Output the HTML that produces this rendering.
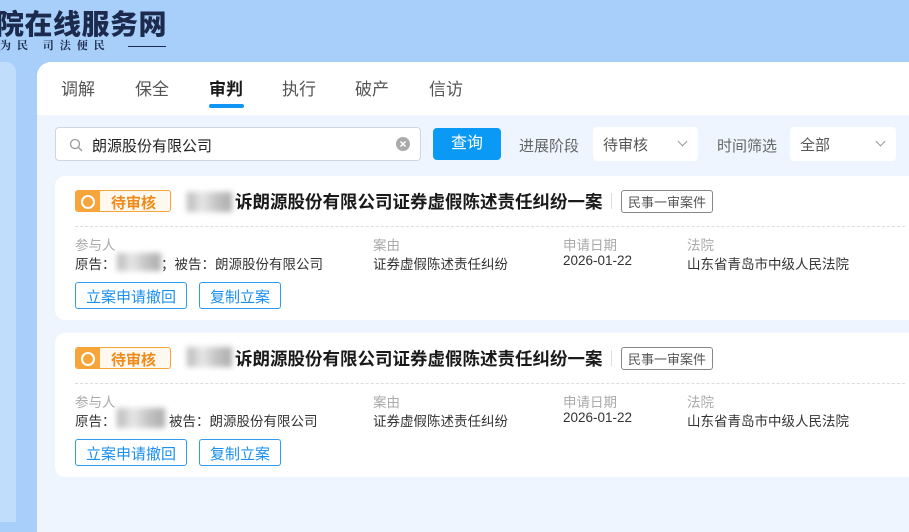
<!DOCTYPE html>
<html><head><meta charset="utf-8"><style>
*{box-sizing:border-box;margin:0;padding:0}
body{width:909px;height:518px;overflow:hidden;background:#a8cffa;font-family:"Liberation Sans","Noto Sans CJK SC",sans-serif;position:relative}
.abs{position:absolute}
.title{left:-4px;top:3px;font-size:28px;font-weight:900;color:#1c2b4d;letter-spacing:0.5px}
.sub{left:0;top:37px;font-size:11px;color:#1c2b4d;font-family:"Noto Serif CJK SC",serif;letter-spacing:6px;font-weight:bold}
.line{left:128px;top:46px;width:38px;height:1px;background:#1c2b4d}
.left{left:0;top:62px;width:16px;height:460px;background:#c1ddfc;border-radius:0 10px 0 0}
.panel{left:37px;top:62px;width:880px;height:470px;background:#eef5fe;border-radius:14px 0 0 0;overflow:hidden}
.tabs{position:absolute;left:0;top:0;width:100%;height:53px;background:#fff}
.tab{position:absolute;top:13px;font-size:17px;color:#555}
.tab.on{color:#1a1a1a;font-weight:bold}
.ul{position:absolute;left:172px;top:42px;width:35px;height:4px;border-radius:2px;background:#1195f5}
.search{left:55px;top:127px;width:366px;height:34px;background:#fff;border:1px solid #cfd6de;border-radius:4px;font-size:15px;color:#222;padding:7px 0 0 36px}
.btn{left:433px;top:128px;width:68px;height:32px;background:#0a99f5;border-radius:4px;color:#fff;font-size:16px;text-align:center;line-height:32px}
.lbl{top:135px;font-size:15px;color:#666}
.sel{top:127px;height:34px;background:#fff;border-radius:4px;font-size:15px;color:#555;padding:7px 0 0 10px}
.chev{position:absolute;right:12px;top:11px;width:7px;height:7px;border-right:1px solid #999;border-bottom:1px solid #999;transform:rotate(45deg)}
.card{left:55px;width:870px;height:144px;background:#fff;border-radius:10px}
.tag{position:absolute;left:20px;top:14px;width:96px;height:22px;border:1px solid #f5a53a;border-radius:3px;background:#fff8ef;overflow:hidden}
.tag .ic{position:absolute;left:0;top:0;width:24px;height:22px;background:#f5a53a}
.tag .ic:after{content:"";position:absolute;left:5px;top:4px;width:10px;height:10px;border:2px solid #fff;border-radius:50%}
.tag span{position:absolute;left:35px;top:1px;font-size:15px;font-weight:bold;color:#f08a1a}
.blur{position:absolute;background:linear-gradient(90deg,#999,#ddd,#aaa,#888);filter:blur(3px);opacity:.7}
.ct{position:absolute;left:180px;top:13px;font-size:17.5px;font-weight:bold;color:#1a1a1a}
.sep{position:absolute;left:556px;top:17px;width:1px;height:16px;background:#ddd}
.kind{position:absolute;left:566px;top:14px;border:1px solid #888;border-radius:3px;font-size:13px;color:#555;padding:1px 6px}
.dash{position:absolute;left:20px;top:50px;width:830px;border-top:1px dashed #ddd}
.h{position:absolute;top:58px;font-size:13.5px;color:#aaa}
.v{position:absolute;top:77px;font-size:13.5px;color:#333}
.ob{position:absolute;top:106px;height:27px;border:1px solid #2d9cf0;border-radius:3px;color:#1a8ff0;font-size:15px;padding:3px 10px 0}
</style></head><body>
<div class="abs title">院在线服务网</div>
<div class="abs sub">为民 司法便民</div>
<div class="abs line"></div>
<div class="abs left"></div>
<div class="abs panel">
<div class="tabs">
<div class="tab" style="left:24px">调解</div>
<div class="tab" style="left:98px">保全</div>
<div class="tab on" style="left:172px">审判</div>
<div class="tab" style="left:245px">执行</div>
<div class="tab" style="left:318px">破产</div>
<div class="tab" style="left:392px">信访</div>
<div class="ul"></div>
</div></div>
<div class="abs search">朗源股份有限公司
<svg style="position:absolute;left:13px;top:10px" width="14" height="14"><circle cx="6" cy="6" r="4.5" stroke="#999" stroke-width="1.3" fill="none"/><line x1="9.5" y1="9.5" x2="13" y2="13" stroke="#999" stroke-width="1.3"/></svg>
<svg style="position:absolute;right:10px;top:9px" width="14" height="14"><circle cx="7" cy="7" r="7" fill="#aaa"/><path d="M4.5 4.5L9.5 9.5M9.5 4.5L4.5 9.5" stroke="#fff" stroke-width="1.5"/></svg></div>
<div class="abs btn">查询</div>
<div class="abs lbl" style="left:519px">进展阶段</div>
<div class="abs sel" style="left:593px;width:105px">待审核<div class="chev"></div></div>
<div class="abs lbl" style="left:717px">时间筛选</div>
<div class="abs sel" style="left:790px;width:106px">全部<div class="chev"></div></div>

<div class="abs card" style="top:176px">
<div class="tag"><div class="ic"></div><span>待审核</span></div>
<div class="blur" style="left:132px;top:16px;width:45px;height:20px"></div>
<div class="ct">诉朗源股份有限公司证券虚假陈述责任纠纷一案</div>
<div class="sep"></div><div class="kind">民事一审案件</div>
<div class="dash"></div>
<div class="h" style="left:20px">参与人</div><div class="h" style="left:318px">案由</div><div class="h" style="left:508px">申请日期</div><div class="h" style="left:632px">法院</div>
<div class="v" style="left:20px">原告：</div><div class="blur" style="left:62px;top:77px;width:44px;height:18px"></div>
<div class="v" style="left:106px">；被告：朗源股份有限公司</div>
<div class="v" style="left:318px">证券虚假陈述责任纠纷</div><div class="v" style="left:508px">2026-01-22</div><div class="v" style="left:632px">山东省青岛市中级人民法院</div>
<div class="ob" style="left:20px">立案申请撤回</div><div class="ob" style="left:144px">复制立案</div>
</div>
<div class="abs card" style="top:333px">
<div class="tag"><div class="ic"></div><span>待审核</span></div>
<div class="blur" style="left:132px;top:14px;width:45px;height:20px"></div>
<div class="ct">诉朗源股份有限公司证券虚假陈述责任纠纷一案</div>
<div class="sep"></div><div class="kind">民事一审案件</div>
<div class="dash"></div>
<div class="h" style="left:20px">参与人</div><div class="h" style="left:318px">案由</div><div class="h" style="left:508px">申请日期</div><div class="h" style="left:632px">法院</div>
<div class="v" style="left:20px">原告：</div><div class="blur" style="left:62px;top:75px;width:48px;height:20px"></div>
<div class="v" style="left:114px">被告：朗源股份有限公司</div>
<div class="v" style="left:318px">证券虚假陈述责任纠纷</div><div class="v" style="left:508px">2026-01-22</div><div class="v" style="left:632px">山东省青岛市中级人民法院</div>
<div class="ob" style="left:20px">立案申请撤回</div><div class="ob" style="left:144px">复制立案</div>
</div>
</body></html>
